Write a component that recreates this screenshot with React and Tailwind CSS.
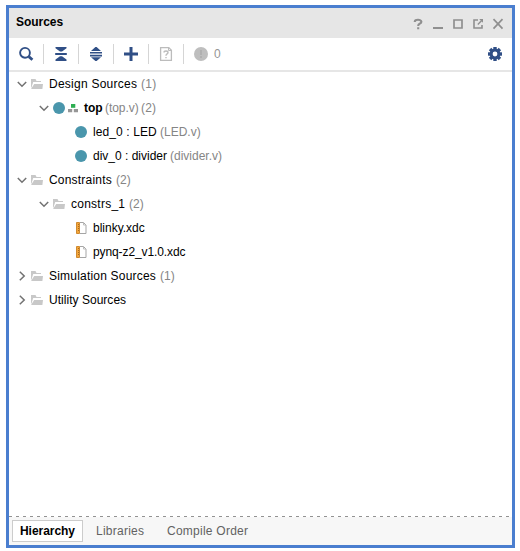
import React from 'react';

const Chevron = ({ open }) => (
  <svg className="h-[12px] w-[12px] shrink-0" viewBox="0 0 12 12" fill="none" stroke="#727272" strokeWidth="1.5">
    {open ? <path d="M1.8 4 L6 8.3 L10.2 4" /> : <path d="M3.8 1.8 L8.2 6 L3.8 10.2" />}
  </svg>
);

const Folder = () => (
  <svg className="h-[12px] w-[14px] shrink-0" viewBox="0 0 14 12">
    <path d="M1 9.5V1H5.5L6.5 3H11V4H3.2L1.5 9.5Z" fill="#c8c8c8" />
    <path d="M4.2 6H13L12.4 11H1.3V10.6L4.2 6Z" fill="#c8c8c8" />
  </svg>
);

const Dot = () => <span className="h-3 w-3 shrink-0 rounded-full bg-[#4a96ac]" />;

const Modules = () => (
  <svg className="ml-[2px] h-[12px] w-[12px] shrink-0" viewBox="0 0 12 12">
    <path d="M4 2H8.3V5.8H4Z" fill="#2eae52" />
    <path d="M1 7H5.2V10.3H1ZM6.8 7H11V10.3H6.8Z" fill="#969696" />
  </svg>
);

const Xdc = () => (
  <svg className="h-[12px] w-[12px] shrink-0" viewBox="0 0 12 12">
    <path d="M5 .5H8.5L11 3V11.5H5" fill="#fff" stroke="#a5a5a5" />
    <path d="M8.5 .5V3H11" fill="none" stroke="#bdbdbd" />
    <path d="M1.5 .5H4.5V11.5H1.5Z" fill="#f5a63b" stroke="#cf8a30" />
    <path d="M3 2.5H4M3 4.5H4M3 6.5H4M3 8.5H4" stroke="#a66b22" />
  </svg>
);

const Row = ({ pad, children }) => <div className={`flex h-6 items-center whitespace-pre ${pad}`}>{children}</div>;
const Gray = ({ className = '', children }) => <span className={`text-[#858585] ${className}`}>{children}</span>;
const Separator = () => <span className="h-5 w-px shrink-0 bg-[#d5d5d5]" />;

const teeth = [0, 45, 90, 135, 180, 225, 270, 315];

export default function App() {
  return (
    <div className="h-[551px] w-[520px] overflow-hidden bg-white pl-[6px] pt-[5px] font-['Liberation_Sans',Arial,sans-serif] text-[12px] leading-[14px] text-black">
      <div className="flex h-[543px] w-[509px] flex-col border-[3px] border-[#4a7ecf] bg-white">
        <div className="flex h-[30px] shrink-0 items-center bg-[#e6e6e6] pl-[7px] pr-[7px]">
          <span className="-mt-[3px] font-bold tracking-[-0.05px]">Sources</span>
          <svg className="ml-auto mt-px h-[14px] w-[92px]" viewBox="0 0 92 14" fill="none" stroke="#8f8f8f" strokeWidth="1.7">
            <path d="M1.8 5V4.4Q2.2 2.8 5 2.8T8.4 4.8Q8.4 6 6.6 6.8Q5.2 7.4 5.2 9M5.2 10.2V12.2" strokeWidth="2.1" />
            <path d="M20 11H30" strokeWidth="2" />
            <path d="M41 3H49V11H41Z" />
            <path d="M65 3H61V11H69V8" strokeWidth="1.6" />
            <path d="M64.8 7.5L68.5 3.8" strokeWidth="1.4" />
            <path d="M66.2 2H70V5.8Z" fill="#8f8f8f" stroke="none" />
            <path d="M80.5 2.2L89.5 11.6M89.5 2.2L80.5 11.6" />
          </svg>
        </div>
        <div className="flex h-[34px] shrink-0 items-center border-b-2 border-[#e6e6e6] pl-[9px] pr-[9px]">
          <svg className="h-[16px] w-[16px]" viewBox="0 0 16 16" fill="none" stroke="#304f86">
            <circle cx="7" cy="6.8" r="4.9" strokeWidth="1.9" />
            <path d="M10.8 10.6L14.4 13.8" strokeWidth="2.8" />
          </svg>
          <span className="ml-[9px] flex"><Separator /></span>
          <svg className="ml-[9px] h-[16px] w-[16px]" viewBox="0 0 16 16" fill="#304f86">
            <path d="M2.5 1H13.5V2.2L9 5.5H7L2.5 2.2ZM2.2 7H13.8V9H2.2ZM7 10.3H9L13.5 13.6V15H2.5V13.6Z" />
          </svg>
          <span className="ml-[9px] flex"><Separator /></span>
          <svg className="ml-[9px] h-[16px] w-[16px]" viewBox="0 0 16 16" fill="#304f86">
            <path d="M7.4 1H8.6L13 5H3ZM2 6H14V7.6H2ZM2 8.8H14V10.4H2ZM3 11.3H13L8.6 15H7.4Z" />
          </svg>
          <span className="ml-[9px] flex"><Separator /></span>
          <svg className="ml-[9px] h-[16px] w-[16px]" viewBox="0 0 16 16" stroke="#304f86" strokeWidth="3">
            <path d="M8 1V15M1 8H15" />
          </svg>
          <span className="ml-[9px] flex"><Separator /></span>
          <svg className="ml-[9px] h-[16px] w-[16px]" viewBox="0 0 16 16" fill="none" stroke="#bcbcbc">
            <path d="M2.6 1.6H10.8L13.4 4.2V14.4H2.6Z" strokeWidth="1.3" />
            <path d="M10.5 2V4.5H13" />
            <path d="M6 6.6Q6 5 8 5T10 6.6Q10 7.5 8.8 8.2Q8 8.7 8 9.8M8 11V12.3" strokeWidth="1.4" />
          </svg>
          <span className="ml-[9px] flex"><Separator /></span>
          <span className="ml-[10px] flex h-[14px] w-[14px] flex-col items-center rounded-full bg-[#bebebe] pt-[3px]">
            <span className="h-[5px] w-[2px] bg-[#b0b0b0]" />
            <span className="mt-px h-[2px] w-[2px] bg-[#b0b0b0]" />
          </span>
          <span className="ml-[6px] text-[#959595]">0</span>
          <svg className="ml-auto h-[16px] w-[16px]" viewBox="0 0 16 16">
            <g fill="#304f86">
              {teeth.map((angle) => <rect key={angle} x="6.3" y="1" width="3.4" height="4" transform={`rotate(${angle} 8 8)`} />)}
            </g>
            <circle cx="8" cy="8" r="3.9" fill="none" stroke="#304f86" strokeWidth="3" />
          </svg>
        </div>
        <div className="flex-1">
          <Row pad="pl-[7px]"><Chevron open /><span className="ml-[2px] flex"><Folder /></span><span className="ml-[5px] w-[92px] tracking-[0.25px]">Design Sources</span><Gray className="tracking-[0.3px]">(1)</Gray></Row>
          <Row pad="pl-[29px]"><Chevron open /><span className="ml-[3px] flex"><Dot /></span><Modules /><span className="ml-[5px] w-[21px] font-bold tracking-[-0.1px]">top</span><Gray className="w-[36px] tracking-[-0.05px]">(top.v)</Gray><Gray className="tracking-[0.2px]">(2)</Gray></Row>
          <Row pad="pl-[66px]"><Dot /><span className="ml-[6px] w-[67px] tracking-[0.1px]">led_0 : LED</span><Gray>(LED.v)</Gray></Row>
          <Row pad="pl-[66px]"><Dot /><span className="ml-[6px] w-[77px]">div_0 : divider</span><Gray>(divider.v)</Gray></Row>
          <Row pad="pl-[7px]"><Chevron open /><span className="ml-[2px] flex"><Folder /></span><span className="ml-[5px] w-[67px] tracking-[0.2px]">Constraints</span><Gray>(2)</Gray></Row>
          <Row pad="pl-[29px]"><Chevron open /><span className="ml-[2px] flex"><Folder /></span><span className="ml-[5px] w-[58px] tracking-[0.25px]">constrs_1</span><Gray>(2)</Gray></Row>
          <Row pad="pl-[66px]"><Xdc /><span className="ml-[6px]">blinky.xdc</span></Row>
          <Row pad="pl-[66px]"><Xdc /><span className="ml-[6px] tracking-[-0.1px]">pynq-z2_v1.0.xdc</span></Row>
          <Row pad="pl-[7px]"><Chevron /><span className="ml-[2px] flex"><Folder /></span><span className="ml-[5px] w-[111px] tracking-[0.2px]">Simulation Sources</span><Gray>(1)</Gray></Row>
          <Row pad="pl-[7px]"><Chevron /><span className="ml-[2px] flex"><Folder /></span><span className="ml-[5px] tracking-[0.03px]">Utility Sources</span></Row>
        </div>
        <div className="h-px shrink-0 bg-[repeating-linear-gradient(90deg,#929292_0_3px,#fff_3px_7px)]" />
        <div className="flex h-[28px] shrink-0 items-start bg-[#f7f7f7] pl-[3px] pt-[3px] text-[#626262]">
          <div className="flex h-[22px] w-[71px] items-center border border-[#cccccc] bg-white pl-[7px] font-bold tracking-[-0.05px] text-black">Hierarchy</div>
          <span className="ml-[13px] mt-[4px] w-[71px] tracking-[0.25px]">Libraries</span>
          <span className="mt-[4px] tracking-[0.25px]">Compile Order</span>
        </div>
      </div>
    </div>
  );
}
